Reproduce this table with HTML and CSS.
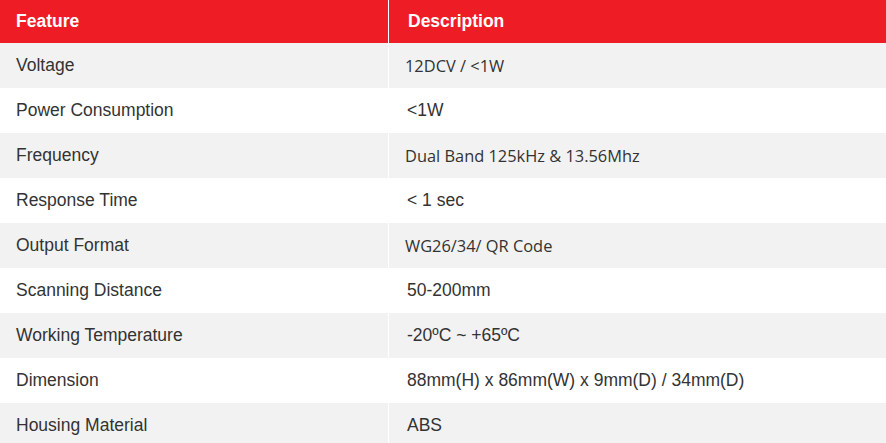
FILE: index.html
```html
<!DOCTYPE html>
<html>
<head>
<meta charset="utf-8">
<link rel="stylesheet" href="styles.css">
</head>
<body>
<table class="spec">
  <thead>
    <tr><th class="c1">Feature</th><th class="c2">Description</th></tr>
  </thead>
  <tbody>
    <tr><td class="c1">Voltage</td><td class="c2 seg">12DCV / &lt;1W</td></tr>
    <tr><td class="c1">Power Consumption</td><td class="c2">&lt;1W</td></tr>
    <tr><td class="c1">Frequency</td><td class="c2 seg">Dual Band 125kHz &amp; 13.56Mhz</td></tr>
    <tr><td class="c1">Response Time</td><td class="c2">&lt; 1 sec</td></tr>
    <tr><td class="c1">Output Format</td><td class="c2 seg">WG26/34/ QR Code</td></tr>
    <tr><td class="c1">Scanning Distance</td><td class="c2">50-200mm</td></tr>
    <tr><td class="c1">Working Temperature</td><td class="c2">-20ºC ~ +65ºC</td></tr>
    <tr><td class="c1">Dimension</td><td class="c2">88mm(H) x 86mm(W) x 9mm(D) / 34mm(D)</td></tr>
    <tr><td class="c1">Housing Material</td><td class="c2">ABS</td></tr>
  </tbody>
</table>
</body>
</html>
```
FILE: styles.css
```css
html, body {
  margin: 0;
  padding: 0;
  background: #ffffff;
}
.spec {
  width: 886px;
  border-collapse: collapse;
  table-layout: fixed;
  font-family: "Liberation Sans", Arial, sans-serif;
  font-size: 17.5px;
  color: #333333;
}
.spec th {
  background: #ee1c25;
  color: #ffffff;
  font-weight: bold;
  text-align: left;
  height: 43px;
  padding: 0;
  vertical-align: middle;
}
.spec td {
  height: 45px;
  padding: 0;
  vertical-align: middle;
}
.spec tbody tr:nth-child(odd) td {
  background: #f2f2f2;
}
.spec .c1 {
  width: 372px;
  padding-left: 16px;
  border-right: 1px solid #ffffff;
}
.spec .c2 {
  padding-left: 18px;
}
.spec th.c2 {
  padding-left: 19px;
}
.spec .seg {
  font-family: "Open Sans", "Segoe UI", sans-serif;
  font-size: 16.4px;
  padding-left: 16px;
}
```
